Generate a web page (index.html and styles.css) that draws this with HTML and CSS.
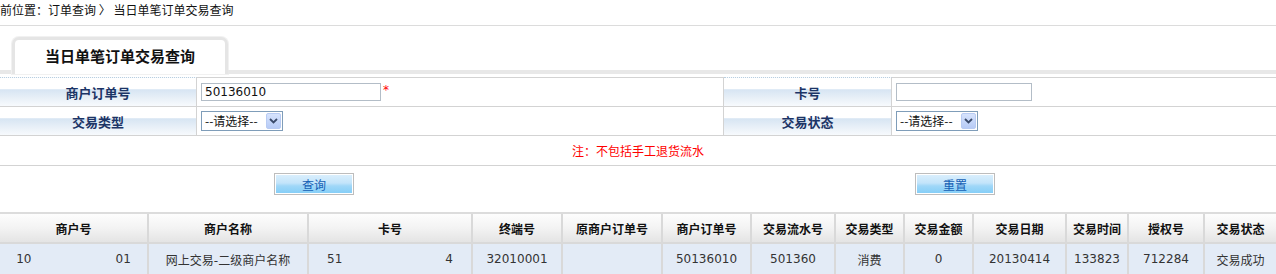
FILE: index.html
```html
<!DOCTYPE html>
<html lang="zh-CN">
<head>
<meta charset="utf-8">
<title>当日单笔订单交易查询</title>
<link rel="stylesheet" href="styles.css">
</head>
<body>
<div class="crumb"><span class="crumb-text">前位置：订单查询 〉 当日单笔订单交易查询</span></div>

<div class="tabbar">
  <div class="tab-gap"></div>
  <div class="tab">当日单笔订单交易查询</div>
  <div class="tab-fill"></div>
</div>

<div class="form">
  <div class="frow">
    <div class="flabel">商户订单号</div>
    <div class="fcell"><input class="inp inp-order" type="text" value="50136010"><span class="req">*</span></div>
    <div class="flabel">卡号</div>
    <div class="fcell"><input class="inp inp-card" type="text" value=""></div>
  </div>
  <div class="frow">
    <div class="flabel">交易类型</div>
    <div class="fcell"><span class="sel"><span class="sel-text">--请选择--</span><span class="sel-btn"><svg width="9" height="6" viewBox="0 0 9 6"><path d="M1 1 L4.5 4.5 L8 1" fill="none" stroke="#3a4a6a" stroke-width="1.8"/></svg></span></span></div>
    <div class="flabel">交易状态</div>
    <div class="fcell"><span class="sel"><span class="sel-text">--请选择--</span><span class="sel-btn"><svg width="9" height="6" viewBox="0 0 9 6"><path d="M1 1 L4.5 4.5 L8 1" fill="none" stroke="#3a4a6a" stroke-width="1.8"/></svg></span></span></div>
  </div>
  <div class="notice">注：不包括手工退货流水</div>
  <div class="btnrow">
    <button class="btn" type="button">查询</button>
    <button class="btn" type="button">重置</button>
  </div>
</div>

<div class="grid">
  <div class="th">商户号</div>
  <div class="th">商户名称</div>
  <div class="th">卡号</div>
  <div class="th">终端号</div>
  <div class="th">原商户订单号</div>
  <div class="th">商户订单号</div>
  <div class="th">交易流水号</div>
  <div class="th">交易类型</div>
  <div class="th">交易金额</div>
  <div class="th">交易日期</div>
  <div class="th">交易时间</div>
  <div class="th">授权号</div>
  <div class="th">交易状态</div>

  <div class="td">10<span class="mask mask-mer"></span>01</div>
  <div class="td">网上交易-二级商户名称</div>
  <div class="td">51<span class="mask mask-card"></span>4</div>
  <div class="td">32010001</div>
  <div class="td"></div>
  <div class="td">50136010</div>
  <div class="td">501360</div>
  <div class="td">消费</div>
  <div class="td">0</div>
  <div class="td">20130414</div>
  <div class="td">133823</div>
  <div class="td">712284</div>
  <div class="td">交易成功</div>
</div>
</body>
</html>
```
FILE: styles.css
```css
* { box-sizing: border-box; }
html, body { margin: 0; padding: 0; background: #fff; overflow: hidden; }
body {
  font-family: "DejaVu Sans", "Noto Sans CJK SC", sans-serif;
  font-size: 12px;
  color: #222;
}

.crumb {
  height: 26px;
  border-bottom: 1px solid #dcdcdc;
  line-height: 19px;
  white-space: nowrap;
}
.crumb-text {
  display: inline-block;
  margin-left: 0;
  font-family: "Noto Sans CJK SC", sans-serif;
  font-size: 12px;
  color: #111;
}

.tabbar {
  margin-top: 11px;
  height: 37px;
  display: flex;
  align-items: flex-end;
}
.tab-gap { width: 12px; height: 4px; background: #e8e8e8; }
.tab-fill { flex: 1; height: 4px; background: #e8e8e8; }
.tab {
  width: 216px;
  height: 37px;
  border: 3px solid #e5e5e5;
  border-bottom: 0;
  border-radius: 7px 7px 0 0;
  box-shadow: 0 0 0 1px #f1f1f1;
  background: #fff;
  display: flex;
  align-items: center;
  justify-content: center;
  padding-bottom: 3px;
  font-family: "Noto Sans CJK SC", sans-serif;
  font-weight: bold;
  font-size: 15px;
  color: #111;
}

.form { margin-top: 3px; }
.frow {
  display: grid;
  grid-template-columns: 197px 527px 168px 1fr;
  height: 29px;
}
.frow > div {
  border-bottom: 1px solid #d3d3d3;
  display: flex;
  align-items: center;
}
.frow:first-child > .fcell { border-top: 1px solid #d3d3d3; }
.frow:first-child > .flabel { border-top: 1px dotted #b9cfe0; }
.frow:first-child { height: 30px; }
.frow > div:nth-child(-n+3) { border-right: 1px solid #d3d3d3; }

.flabel {
  justify-content: center;
  background: linear-gradient(to bottom, #fff 0, #fff 38%, #d7e5f3 42%, #eaf1f8 75%, #f7fafd 100%);
  font-family: "Noto Sans CJK SC", sans-serif;
  font-weight: bold;
  font-size: 13px;
  color: #1c3466;
}
.fcell { padding-left: 4px; }

.inp {
  height: 18px;
  border: 1px solid #b3bdc7;
  padding: 0 3px;
  margin: 0;
  font-family: "DejaVu Sans", sans-serif;
  font-size: 12px;
  color: #111;
  background: #fff;
  outline: none;
}
.inp-order { width: 180px; }
.inp-card { width: 136px; }
.req {
  color: #f00;
  font-size: 12px;
  margin-left: 2px;
  margin-top: -5px;
}

.sel {
  display: inline-flex;
  align-items: center;
  width: 82px;
  height: 20px;
  border: 1px solid #7f9db9;
  background: #fff;
  padding: 1px;
}
.sel-text {
  flex: 1;
  padding-left: 2px;
  font-family: "Noto Sans CJK SC", sans-serif;
  font-size: 12px;
  color: #111;
  line-height: 16px;
}
.sel-btn {
  width: 15px;
  height: 16px;
  background: linear-gradient(to bottom, #d6e3fd, #b7cbf6);
  border: 1px solid #b8cbf3;
  border-radius: 2px;
  display: flex;
  align-items: center;
  justify-content: center;
}

.notice {
  height: 30px;
  border-bottom: 1px solid #d3d3d3;
  display: flex;
  align-items: center;
  justify-content: center;
  font-family: "Noto Sans CJK SC", sans-serif;
  color: #f00;
  font-size: 12px;
}

.btnrow {
  height: 46px;
  display: flex;
  align-items: flex-start;
  padding: 7px 0 0 274px;
  gap: 561px;
}
.btn {
  width: 80px;
  height: 22px;
  margin: 0;
  padding: 0;
  border: 1px solid #bdbdbd;
  box-shadow: inset 0 0 0 1px #fff;
  background: linear-gradient(to bottom, #dcf0fd 0, #c3e4fa 45%, #9fd7f8 60%, #82cdf7 100%);
  font-family: "Noto Sans CJK SC", sans-serif;
  font-size: 12px;
  color: #1560b5;
  cursor: pointer;
}

.grid {
  display: grid;
  grid-template-columns: 147px 158px 162px 88px 98px 87px 82px 67px 67px 91px 60px 74px 1fr;
  grid-template-rows: 28px 30px;
  gap: 2px;
  background: #d9d9d9;
  border-top: 2px solid #dcdcdc;
}
.th, .td {
  display: flex;
  align-items: center;
  justify-content: center;
  white-space: nowrap;
}
.th {
  background: linear-gradient(to bottom, #fdfdfd 0, #f3f3f3 50%, #e4e4e4 100%);
  font-family: "Noto Sans CJK SC", sans-serif;
  font-weight: bold;
  font-size: 12px;
  color: #111;
}
.td {
  background: #e3ebf6;
  font-size: 12px;
  color: #333;
  font-family: "DejaVu Sans", "Noto Sans CJK SC", sans-serif;
}
.mask {
  display: inline-block;
  height: 12px;
}
.mask-mer { width: 84px; }
.mask-card { width: 103px; }
```
